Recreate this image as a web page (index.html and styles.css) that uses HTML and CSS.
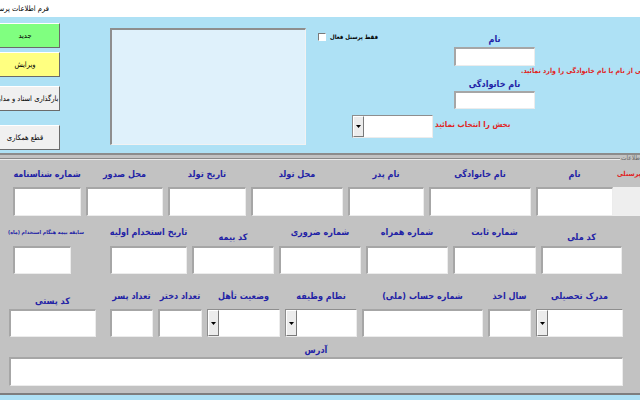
FILE: index.html
```html
<!DOCTYPE html>
<html lang="fa">
<head>
<meta charset="utf-8">
<title>فرم اطلاعات پرسنلی</title>
<link rel="stylesheet" href="styles.css">
</head>
<body>
<div class="window">
  <div class="titlebar"><div class="title">فرم اطلاعات پرسنلی</div></div>
  <div class="top">
    <div class="buttons">
      <div class="btn btn-green">جدید</div>
      <div class="btn btn-yellow">ویرایش</div>
      <div class="btn btn-gray btn-upload">بارگذاری اسناد و مدارک</div>
      <div class="btn btn-gray btn-end">قطع همکاری</div>
    </div>
    <div class="listbox"></div>
    <div class="search">
      <div class="search-head">
        <div class="cbgroup"><span class="cb"></span><span class="cb-label">فقط پرسنل فعال</span></div>
        <div class="lbl search-lbl">نام</div>
      </div>
      <div class="tb search-tb"></div>
      <div class="warn warn1"><span class="rtl">لطفا یکی از نام یا نام خانوادگی را وارد نمائید.</span></div>
      <div class="lbl search-lbl search-lbl2">نام خانوادگی</div>
      <div class="tb search-tb search-tb2"></div>
      <div class="combo-row">
        <div class="combo combo-search">
          <div class="combo-btn"><svg width="5" height="3" viewBox="0 0 5 3"><path d="M0 0H5L2.5 3Z" fill="#000"/></svg></div>
          <div class="combo-field"></div>
        </div>
        <span class="warn warn2"><span class="rtl">بخش را انتخاب نمائید</span></span>
      </div>
    </div>
  </div>
  <div class="lower">
    <div class="group-head"><div class="group-line"></div><span class="group-cap rtl">اطلاعات</span></div>

    <div class="row row1">
      <div class="col w68"><div class="lbl">شماره شناسنامه</div><div class="tb h29"></div></div>
      <div class="col w77"><div class="lbl">محل صدور</div><div class="tb h29"></div></div>
      <div class="col w78"><div class="lbl">تاریخ تولد</div><div class="tb h29"></div></div>
      <div class="col w92"><div class="lbl">محل تولد</div><div class="tb h29"></div></div>
      <div class="col w76"><div class="lbl">نام پدر</div><div class="tb h29"></div></div>
      <div class="col w102"><div class="lbl">نام خانوادگی</div><div class="tb h29"></div></div>
      <div class="col w77"><div class="lbl">نام</div><div class="tb h29"></div></div>
      <div class="col col-id"><div class="lbl lbl-red"><span class="rtl">کد پرسنلی</span></div><div class="tb-disabled h29"></div></div>
    </div>

    <div class="row row2">
      <div class="col w58"><div class="lbl lbl-tiny">سابقه بیمه هنگام استخدام (ماه)</div><div class="tb h28"></div></div>
      <div class="col w77 col-wide-gap"><div class="lbl">تاریخ استخدام اولیه</div><div class="tb h28"></div></div>
      <div class="col w82"><div class="lbl low">کد بیمه</div><div class="tb h28"></div></div>
      <div class="col w82"><div class="lbl">شماره ضروری</div><div class="tb h28"></div></div>
      <div class="col w82"><div class="lbl">شماره همراه</div><div class="tb h28"></div></div>
      <div class="col w83"><div class="lbl">شماره ثابت</div><div class="tb h28"></div></div>
      <div class="col w81"><div class="lbl low">کد ملی</div><div class="tb h28"></div></div>
    </div>

    <div class="row row3">
      <div class="col w87"><div class="lbl low">کد پستی</div><div class="tb h28"></div></div>
      <div class="col w43 col-gap9"><div class="lbl">تعداد پسر</div><div class="tb h28"></div></div>
      <div class="col w44"><div class="lbl">تعداد دختر</div><div class="tb h28"></div></div>
      <div class="col w73"><div class="lbl">وضعیت تأهل</div>
        <div class="combo h28"><div class="combo-btn"><svg width="5" height="3" viewBox="0 0 5 3"><path d="M0 0H5L2.5 3Z" fill="#000"/></svg></div><div class="combo-field"></div></div>
      </div>
      <div class="col w72"><div class="lbl">نظام وظیفه</div>
        <div class="combo h28"><div class="combo-btn"><svg width="5" height="3" viewBox="0 0 5 3"><path d="M0 0H5L2.5 3Z" fill="#000"/></svg></div><div class="combo-field"></div></div>
      </div>
      <div class="col w121"><div class="lbl">شماره حساب (ملی)</div><div class="tb h28"></div></div>
      <div class="col w43"><div class="lbl">سال اخذ</div><div class="tb h28"></div></div>
      <div class="col w87"><div class="lbl">مدرک تحصیلی</div>
        <div class="combo h28"><div class="combo-btn"><svg width="5" height="3" viewBox="0 0 5 3"><path d="M0 0H5L2.5 3Z" fill="#000"/></svg></div><div class="combo-field"></div></div>
      </div>
    </div>

    <div class="address">
      <div class="lbl addr-lbl">آدرس</div>
      <div class="tb addr-tb"></div>
    </div>
  </div>
</div>
</body>
</html>
```

FILE: styles.css
```css
* { box-sizing: border-box; }
html, body { margin: 0; padding: 0; }
body {
  width: 640px;
  height: 400px;
  overflow: hidden;
  background: #aee1f5;
  font-family: "DejaVu Sans Condensed", "DejaVu Sans", sans-serif;
}
.window { width: 640px; height: 400px; overflow: hidden; }
.rtl { direction: rtl; unicode-bidi: isolate; }

/* generic controls */
.tb {
  background: #ffffff;
  border-style: solid;
  border-width: 2px 1px 1px 2px;
  border-color: #a6a6a6 #ececec #ececec #a6a6a6;
  width: 100%;
}
.tb-disabled { background: #eeeeee; width: 40px; }
.h29 { height: 29px; }
.h28 { height: 28px; }
.combo {
  display: flex;
  width: 100%;
  border-style: solid;
  border-width: 1px;
  border-color: #8e8e8e #ececec #ececec #8e8e8e;
}
.combo-btn {
  width: 11px;
  flex: none;
  display: flex;
  align-items: center;
  justify-content: center;
  background: #ececec;
  border: 1px solid;
  border-color: #ffffff #7a7a7a #7a7a7a #ffffff;
}
.combo-field { flex: 1; background: #fff; }
.lbl {
  font-size: 9px;
  font-weight: bold;
  color: #2222a6;
  line-height: 14px;
  height: 14px;
  white-space: nowrap;
  direction: rtl;
}
.lbl-red { color: #e02424; }

/* title */
.titlebar { height: 17px; background: #ffffff; }
.title {
  width: 49px;
  direction: rtl;
  white-space: nowrap;
  overflow: hidden;
  font-size: 7.5px;
  line-height: 17px;
  color: #000;
}

.top { height: 136px; background: #aee1f5; display: flex; }

.buttons {
  margin-left: -10px;
  width: 70px;
  flex: none;
  display: flex;
  flex-direction: column;
  padding-top: 6px;
}
.btn {
  height: 25px;
  width: 70px;
  display: flex;
  align-items: center;
  justify-content: center;
  white-space: nowrap;
  font-size: 7.5px;
  color: #000;
  direction: rtl;
  border: 1px solid;
  border-color: #ffffff #6b6b6b #6b6b6b #ffffff;
}
.btn-green { background: #80ff80; }
.btn-yellow { background: #ffff80; margin-top: 4px; }
.btn-gray { background: #f0f0f0; }
.btn-upload { margin-top: 9px; }
.btn-end { margin-top: 14px; }

.listbox {
  flex: none;
  margin: 11px 0 0 50px;
  width: 196px;
  height: 117px;
  background: #dff1fb;
  border-style: solid;
  border-width: 2px 1px 1px 2px;
  border-color: #8e8e8e #f2f2f2 #f2f2f2 #8e8e8e;
}

.search {
  flex: none;
  width: 334px;
  display: flex;
  flex-direction: column;
  padding-top: 15px;
}
.search-head { display: flex; height: 15px; }
.cbgroup {
  width: 148px;
  padding-left: 12px;
  display: flex;
  align-items: flex-start;
}
.cb {
  width: 8px;
  height: 8px;
  margin-top: 1px;
  background: #fff;
  border: 1px solid;
  border-color: #7a7a7a #ffffff #ffffff #7a7a7a;
}
.cb-label {
  margin-left: 4px;
  font-size: 6px;
  font-weight: bold;
  line-height: 10px;
  direction: rtl;
  white-space: nowrap;
  color: #000;
}
.search .search-lbl { width: 81px; text-align: center; }
.search .search-lbl2 { margin-left: 148px; }
.search .search-tb { margin-left: 148px; width: 81px; height: 19px; }
.search .search-tb2 { height: 18px; }

.warn {
  color: #e02424;
  font-size: 7px;
  font-weight: bold;
  white-space: nowrap;
}
.warn1 { margin-left: 215px; height: 11px; line-height: 11px; }
.combo-row { display: flex; align-items: flex-start; margin: 6px 0 0 46px; }
.search .combo-search { width: 81px; height: 23px; flex: none; }
.warn2 { margin: 4px 0 0 2px; line-height: 12px; font-size: 8px; }

/* lower panel */
.lower {
  height: 242px;
  background: #c2c2c2;
  border-top: 2px solid #8c8c8c;
  border-bottom: 2px solid #7e7e7e;
}
.group-head { display: flex; align-items: center; height: 7px; }
.group-line {
  width: 620px;
  flex: none;
  border-top: 1px solid #8a8a8a;
  border-bottom: 1px solid #ececec;
}
.group-cap {
  font-size: 6.5px;
  line-height: 7px;
  color: #6a6a6a;
  white-space: nowrap;
  padding-left: 1px;
}

.row { display: flex; align-items: flex-end; gap: 5px; }
.col { display: flex; flex-direction: column; align-items: center; flex: none; }
.row1 { padding-left: 13px; margin-top: 5px; }
.row1 .lbl { margin-bottom: 6px; }
.row2 { padding-left: 13px; margin-top: 9px; }
.row2 .lbl { margin-bottom: 7px; }
.row2 .lbl.low { margin-bottom: 2px; }
.row3 { padding-left: 9px; margin-top: 15px; }
.row3 .lbl { margin-bottom: 6px; }
.row3 .lbl.low { margin-bottom: 1px; }

.row2 .lbl-tiny { font-size: 5.3px; align-self: flex-start; margin-left: -5px; }

.col-id { margin-left: -5px; align-items: flex-start; }
.row1 .col-id .lbl { margin-left: 4px; font-size: 7px; }
.col-wide-gap { margin-left: 34px; }
.col-gap9 { margin-left: 9px; }

.w43 { width: 43px; }
.w44 { width: 44px; }
.w58 { width: 58px; }
.w68 { width: 68px; }
.w72 { width: 72px; }
.w73 { width: 73px; }
.w76 { width: 76px; }
.w77 { width: 77px; }
.w78 { width: 78px; }
.w81 { width: 81px; }
.w82 { width: 82px; }
.w83 { width: 83px; }
.w87 { width: 87px; }
.w92 { width: 92px; }
.w102 { width: 102px; }
.w121 { width: 121px; }

.address { padding-left: 9px; display: flex; flex-direction: column; }
.address .addr-lbl { width: 614px; text-align: center; margin-top: 7px; line-height: 12px; height: 12px; }
.address .addr-tb { width: 614px; height: 29px; margin-top: 1px; }
```
